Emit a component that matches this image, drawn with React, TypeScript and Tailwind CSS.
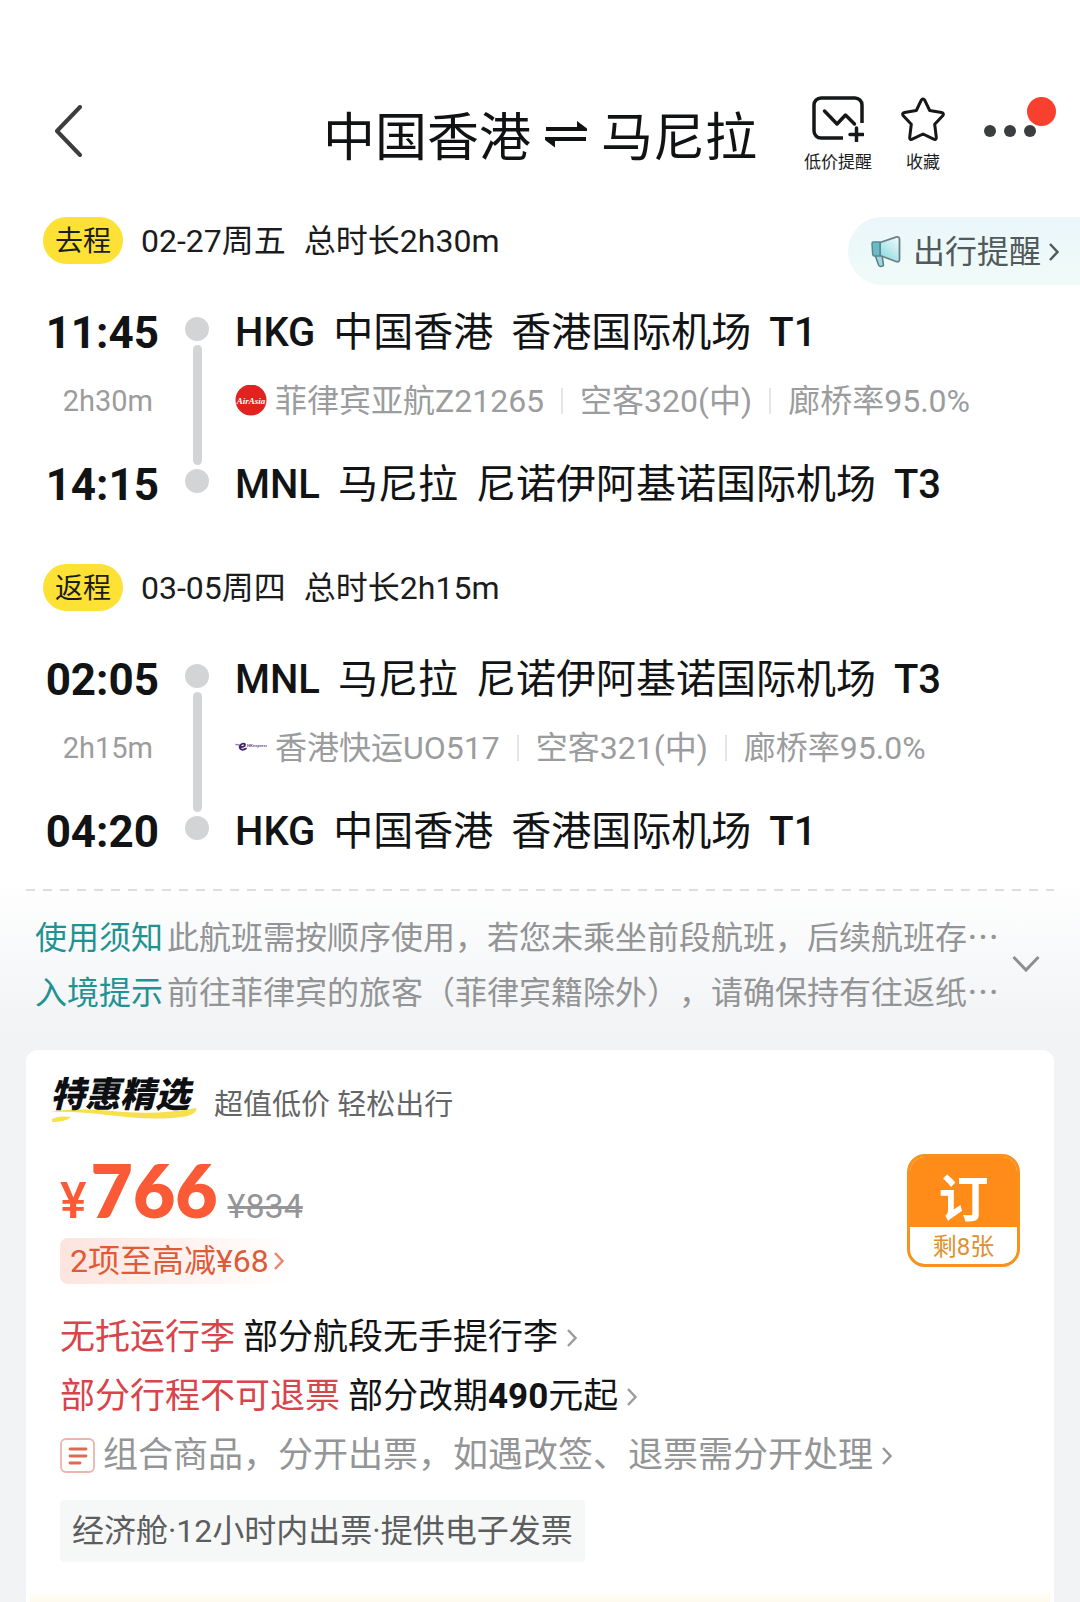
import React from 'react'
import clsx from 'clsx'

interface AirportItem {
  time: string
  code: string
  city: string
  airport: string
  terminal: string
}

interface LegItem {
  label: string
  date: string
  total: string
  duration: string
  from: AirportItem
  to: AirportItem
  logo: React.ReactNode
  details: string[]
}

function AirAsiaLogo() {
  return (
    <svg viewBox="0 0 32 32" className="w-8 h-8 shrink-0">
      <circle cx="16" cy="15" r="15.5" fill="#e0231f" />
      <text x="16" y="18.5" textAnchor="middle" fill="#fff" fontSize="9" fontStyle="italic" fontWeight="700" fontFamily="Liberation Serif, serif">
        AirAsia
      </text>
    </svg>
  )
}

function HkExpressLogo() {
  return (
    <svg viewBox="0 0 32 32" className="w-8 h-8 shrink-0">
      <path d="M1 12.5c2 0 4 .6 5 1.500" fill="none" stroke="#8d7ba8" strokeWidth="1.4" strokeLinecap="round" />
      <path d="M4.500 14.8c3 .6 5.500-.2 5.500-1.800 0-2-4-2-5 1-1 3.500 2.500 5 6 2.500" fill="none" stroke="#43256f" strokeWidth="1.8" strokeLinecap="round" />
      <text x="12" y="14.5" fill="#5a4384" fontSize="4" fontWeight="700" fontFamily="Liberation Sans, sans-serif">
        HKexpress
      </text>
    </svg>
  )
}

function Chevron({ className }: { className?: string }) {
  return (
    <svg viewBox="0 0 12 20" className={clsx('w-3 h-5 shrink-0', className)} fill="none" stroke="currentColor" strokeWidth="2.5">
      <path d="M2 2 9.500 10 2 18" />
    </svg>
  )
}

const LEGS: LegItem[] = [
  {
    label: '去程',
    date: '02-27周五',
    total: '总时长2h30m',
    duration: '2h30m',
    from: { time: '11:45', code: 'HKG', city: '中国香港', airport: '香港国际机场', terminal: 'T1' },
    to: { time: '14:15', code: 'MNL', city: '马尼拉', airport: '尼诺伊阿基诺国际机场', terminal: 'T3' },
    logo: <AirAsiaLogo />,
    details: ['菲律宾亚航Z21265', '空客320(中)', '廊桥率95.0%']
  },
  {
    label: '返程',
    date: '03-05周四',
    total: '总时长2h15m',
    duration: '2h15m',
    from: { time: '02:05', code: 'MNL', city: '马尼拉', airport: '尼诺伊阿基诺国际机场', terminal: 'T3' },
    to: { time: '04:20', code: 'HKG', city: '中国香港', airport: '香港国际机场', terminal: 'T1' },
    logo: <HkExpressLogo />,
    details: ['香港快运UO517', '空客321(中)', '廊桥率95.0%']
  }
]

const NOTICES = [
  { title: '使用须知', text: '此航班需按顺序使用，若您未乘坐前段航班，后续航班存…' },
  { title: '入境提示', text: '前往菲律宾的旅客（菲律宾籍除外），请确保持有往返纸…' }
]

function Header() {
  return (
    <header className="pt-[84px]">
      <div className="h-24 grid grid-cols-[1fr_auto_1fr] items-center">
        <button aria-label="返回" className="ml-[53px] justify-self-start cursor-pointer">
          <svg viewBox="0 0 30 54" className="w-[30px] h-[54px]" fill="none" stroke="#3c3d3f" strokeWidth="4" strokeLinecap="round" strokeLinejoin="round">
            <path d="M27 2 4 26 27 50" />
          </svg>
        </button>

        <h1 className="pt-3.5 flex items-center gap-3.5 text-[52px] leading-[60px] text-[#101214]">
          中国香港
          <svg viewBox="0 0 42 36" className="w-[42px] h-9" fill="#101214">
            <path d="M1 6h31V0l10 7.500v2.500H1zM41 20H10v6.500L0 19v-3h41z" />
          </svg>
          马尼拉
        </h1>

        <div className="flex items-center justify-end pr-6">
          <button className="pt-1 flex flex-col items-center gap-2.5 cursor-pointer">
            <svg viewBox="0 0 52 46" className="w-[52px] h-[46px]" fill="none" stroke="#161718" strokeWidth="3.5" strokeLinecap="round" strokeLinejoin="round">
              <path d="M31 42H9a7 7 0 0 1-7-7V9a7 7 0 0 1 7-7h34a7 7 0 0 1 7 7v18" strokeLinecap="butt" />
              <path d="M12.5 15 25 28l8.500-9 9 9" />
              <path d="M44.5 32v13M38 38.5h13" />
            </svg>
            <span className="text-[17px] leading-5 text-[#1c1d1e]">低价提醒</span>
          </button>
          <button className="ml-7 pt-1 flex flex-col items-center gap-2.5 cursor-pointer">
            <svg viewBox="0 0 46 46" className="w-[46px] h-[46px]" fill="none" stroke="#161718" strokeWidth="3" strokeLinejoin="round">
              <path d="M23 3c.8 0 1.3.4 1.7 1.2l5 10.3 11.8 2c2 .4 2.500 1.8 1.2 3.2l-8 8.6 1.6 13c.2 1.8-1 2.6-2.6 1.9L23 38l-10.7 5.2c-1.6.7-2.8-.1-2.6-1.9l1.6-13-8-8.6c-1.3-1.4-.8-2.8 1.2-3.2l11.8-2 5-10.3C21.7 3.4 22.2 3 23 3z" />
            </svg>
            <span className="text-[17px] leading-5 text-[#1c1d1e]">收藏</span>
          </button>
          <button aria-label="更多" className="relative ml-9 cursor-pointer">
            <svg viewBox="0 0 74 54" className="w-[74px] h-[54px]" fill="#3c3d3f">
              <circle cx="8" cy="26" r="6" />
              <circle cx="28" cy="26" r="6" />
              <circle cx="48" cy="26" r="6" />
            </svg>
            <span className="absolute right-0 -top-2 w-[29px] h-[29px] rounded-full bg-[#f8402f]" />
          </button>
        </div>
      </div>
    </header>
  )
}

function AirportRow({ item }: { item: AirportItem }) {
  return (
    <div className="h-14 flex items-start gap-[18px] text-[40px] leading-[60px] text-[#111314] whitespace-nowrap">
      <span className="font-medium">{item.code}</span>
      <span>{item.city}</span>
      <span>{item.airport}</span>
      <span className="font-medium">{item.terminal}</span>
    </div>
  )
}

function TravelReminder() {
  return (
    <a href="#reminder" className="shrink-0 h-[68px] pl-[22px] pr-5 pt-0.5 rounded-l-full bg-linear-to-b from-[#eaf6f9] to-[#f0fbf8] flex items-center text-[32px] leading-[48px] text-[#51595b]">
      <svg viewBox="0 0 32 34" className="w-8 h-[34px] mr-[11px]" fill="none" strokeLinejoin="round">
        <defs>
          <linearGradient id="horn" x1="1" y1="0" x2="0.3" y2="1">
            <stop offset="0" stopColor="#f4fbfc" />
            <stop offset="1" stopColor="#8fdbe3" />
          </linearGradient>
        </defs>
        <path d="M5 20h7l1.500 10c.2 1.500-4 2-4.800.3z" fill="#a3d5dc" stroke="#4f7f86" strokeWidth="1.5" />
        <path d="M10 7.500 26 2.200c2.200-.7 3.500.3 3.500 2.300v20c0 2-1.500 2.700-3.500 2L10 20.500z" fill="url(#horn)" stroke="#6b7f84" strokeWidth="1.8" />
        <path d="M2 8.500C2 7.600 2.600 7 3.500 7H10v14H4.500c-1 0-1.700-.7-1.800-1.600z" fill="#6fb9c2" stroke="#4f8d96" strokeWidth="1.5" />
      </svg>
      出行提醒
      <Chevron className="ml-[7px]" />
    </a>
  )
}

function Leg({ leg, children }: { leg: LegItem; children?: React.ReactNode }) {
  return (
    <section>
      <div className="h-[47px] flex items-start justify-between pl-[43px]">
        <div className="flex items-start text-[32px] leading-[49px] text-[#1b1c1d]">
          <span className="h-[47px] px-3 rounded-full bg-[#fde135] text-[28px] leading-[49px]">{leg.label}</span>
          <span className="ml-[18px]">{leg.date}</span>
          <span className="ml-[18px]">{leg.total}</span>
        </div>
        {children}
      </div>

      <div className="mt-[39px] pl-[43px] flex gap-[26px]">
        {/* Times */}
        <div className="w-[116px] shrink-0 text-right">
          <div className="h-14 text-[44px] leading-[60px] font-bold text-[#111314]">{leg.from.time}</div>
          <div className="h-[84px] mb-3 pr-1.5 text-[29px] leading-[84px] text-[#9b9c9e]">{leg.duration}</div>
          <div className="h-14 text-[44px] leading-[60px] font-bold text-[#111314]">{leg.to.time}</div>
        </div>

        {/* Rail */}
        <div className="w-6 shrink-0 pt-3.5 pb-[18px] flex flex-col items-center gap-1">
          <span className="w-6 h-6 rounded-full bg-[#d3d4d6]" />
          <span className="w-[9px] flex-1 rounded-full bg-[#d3d4d6]" />
          <span className="w-6 h-6 rounded-full bg-[#d3d4d6]" />
        </div>

        {/* Airports */}
        <div className="min-w-0">
          <AirportRow item={leg.from} />
          <div className="h-[84px] mb-3 flex items-center text-[32px] leading-[48px] text-[#9b9c9e] whitespace-nowrap">
            {leg.logo}
            {leg.details.map((d, i) => (
              <span key={d} className={clsx('flex items-center', i === 0 && 'ml-2')}>
                {i > 0 && <i className="w-0.5 h-[26px] mx-[17px] bg-[#e4e5e6]" />}
                {d}
              </span>
            ))}
          </div>
          <AirportRow item={leg.to} />
        </div>
      </div>
    </section>
  )
}

function Notices() {
  return (
    <div className="pt-[31px] pb-8 px-[26px] bg-linear-to-b from-white from-10% to-[#f1f3f5] to-90%">
      <div className="h-0.5 bg-[repeating-linear-gradient(90deg,#dcdddd_0_9px,transparent_9px_17px)]" />
      <div className="mt-[17px] pl-[9px] pr-3.5 flex items-center justify-between">
        <div className="min-w-0 text-[32px] leading-[55px] font-['Noto_Sans_CJK_SC',sans-serif] [text-spacing-trim:space-all]">
          {NOTICES.map((n) => (
            <p key={n.title} className="flex gap-1 whitespace-nowrap">
              <a href="#notice" className="text-[#1f9292]">{n.title}</a>
              <span className="text-[#939495]">{n.text}</span>
            </p>
          ))}
        </div>
        <button aria-label="展开" className="cursor-pointer shrink-0">
          <svg viewBox="0 0 28 18" className="w-7 h-[18px]" fill="none" stroke="#8d8e90" strokeWidth="3">
            <path d="M1.5 3 14 16 26.5 3" />
          </svg>
        </button>
      </div>
    </div>
  )
}

function FareCard() {
  return (
    <div className="flex-1 flex flex-col mx-[26px] pt-5 rounded-t-xl bg-white">
      <div className="px-[34px] flex-1">
        {/* Title */}
        <div className="h-[50px] flex items-start">
          <div className="relative -ml-2.5 pr-2 text-[35px] leading-[52px] font-black italic text-[#0d0f12]">
            <svg viewBox="0 0 148 16" className="absolute left-0 top-[37px] w-[148px] h-4" fill="#f6e04c">
              <path d="M0 5c18-4 40-3 62-1 30 3 58 2 84-3 2 3-4 8-14 9-24 3-50 1-74-2C38 6 20 4 0 5z" />
              <path d="M2 12c6-3 12-3 19-2-4 4-12 5-19 5z" />
            </svg>
            <span className="relative">特惠精选</span>
          </div>
          <span className="ml-4 pt-[15px] text-[29px] leading-10 text-[#646566]">超值低价 轻松出行</span>
        </div>

        {/* Price */}
        <div className="mt-[34px] flex items-start justify-between">
          <div>
            <div className="h-[76px] flex items-baseline leading-[72px] text-[#fa5a35]">
              <span className="text-[50px] font-medium">¥</span>
              <span className="ml-1 text-[73px] font-extrabold font-['Lato',sans-serif]">766</span>
              <s className="ml-2.5 text-[34px] text-[#949596]">¥834</s>
            </div>
            <a href="#discount" className="mt-2 h-[46px] w-fit pl-2.5 pr-1.5 rounded-lg bg-linear-to-r from-[#fde4de] to-white flex items-center text-[32px] leading-[46px] text-[#df5a35]">
              2项至高减¥68
              <Chevron className="ml-1 text-[#ec8570]" />
            </a>
          </div>
          <button className="w-[113px] h-[113px] rounded-[18px] border-[3px] border-[#f7921f] bg-white overflow-hidden flex flex-col cursor-pointer">
            <span className="h-[70px] w-full bg-[#ff8c18] text-white text-[50px] leading-[86px] font-bold">订</span>
            <span className="w-full text-[24px] leading-10 text-[#df8f2f]">剩8张</span>
          </button>
        </div>

        {/* Rules */}
        <div className="mt-6 text-[35px] leading-[59px] text-[#111314]">
          <a href="#baggage" className="flex items-center whitespace-nowrap">
            <span className="mr-2 text-[#d9434a]">无托运行李</span>
            部分航段无手提行李
            <Chevron className="ml-2 text-[#9b9c9e]" />
          </a>
          <a href="#refund" className="flex items-center whitespace-nowrap">
            <span className="mr-2 text-[#d9434a]">部分行程不可退票</span>
            <span>部分改期<b className="font-bold">490</b>元起</span>
            <Chevron className="ml-2 text-[#9b9c9e]" />
          </a>
          <a href="#combo" className="flex items-center whitespace-nowrap text-[#949596]">
            <svg viewBox="0 0 35 35" className="w-[35px] h-[35px] mr-2 shrink-0" fill="none">
              <rect x="1" y="1" width="33" height="33" rx="5" stroke="#eeb5aa" strokeWidth="1.8" />
              <path d="M10 11h16M10 18h16M10 25h10" stroke="#dd6a52" strokeWidth="2.8" strokeLinecap="round" />
            </svg>
            组合商品，分开出票，如遇改签、退票需分开处理
            <Chevron className="ml-2" />
          </a>
        </div>

        <div className="mt-[15px] w-fit h-[62px] px-3 rounded-sm bg-[#f6f7f7] text-[32px] leading-[62px] text-[#5c5d5e] whitespace-nowrap">
          经济舱·12小时内出票·提供电子发票
        </div>
      </div>
      <div className="mx-1 h-3 bg-linear-to-b from-white to-[#fffaec]" />
    </div>
  )
}

export default function App() {
  return (
    <main lang="zh-CN" className="min-h-screen flex flex-col bg-[#f1f3f5] overflow-x-hidden font-['Roboto','Noto_Sans_CJK_SC',sans-serif]">
      <div className="bg-white">
        <Header />
        <div className="pt-[37px] flex flex-col gap-[53px]">
          <Leg leg={LEGS[0]}>
            <TravelReminder />
          </Leg>
          <Leg leg={LEGS[1]} />
        </div>
      </div>
      <Notices />
      <FareCard />
    </main>
  )
}
